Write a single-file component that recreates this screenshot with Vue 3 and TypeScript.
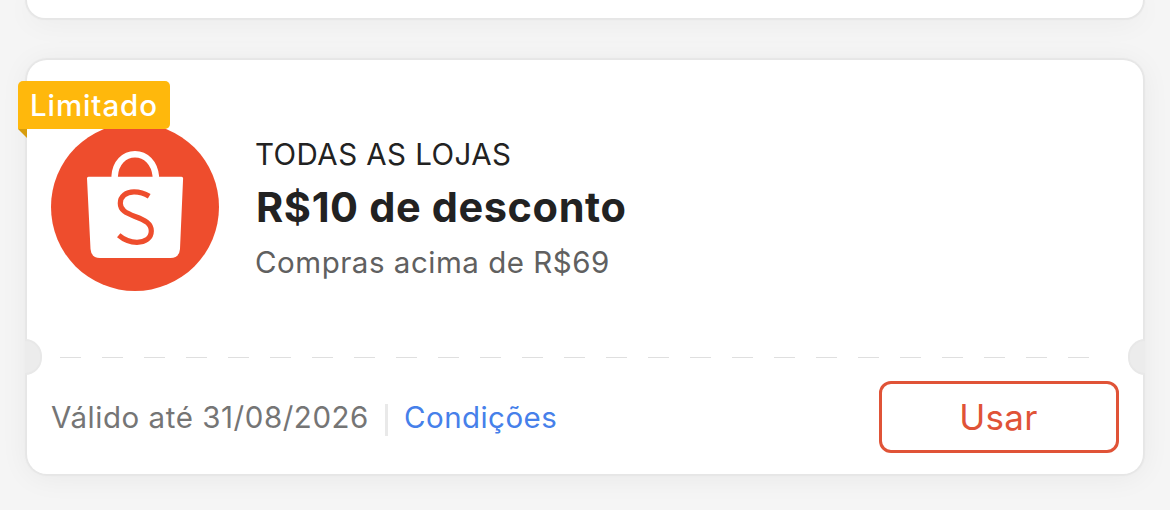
<script setup lang="ts">
interface Voucher {
  tag: string
  scope: string
  title: string
  minimum: string
  validity: string
  terms: string
  action: string
}

const voucher: Voucher = {
  tag: 'Limitado',
  scope: 'TODAS AS LOJAS',
  title: 'R$10 de desconto',
  minimum: 'Compras acima de R$69',
  validity: 'Válido até 31/08/2026',
  terms: 'Condições',
  action: 'Usar',
}
</script>

<template>
  <main class="page">
    <section class="card card-previous"></section>
    <article class="card voucher">
      <div class="tag"><span class="tag-text">{{ voucher.tag }}</span></div>
      <span class="notch notch-left"></span>
      <span class="notch notch-right"></span>

      <div class="main">
        <svg class="logo" viewBox="0 0 168 168" aria-hidden="true">
          <circle cx="84" cy="84" r="84" fill="#ee4d2d" />
          <path d="M63.700 56V53C64.500 40 73 31.200 84 31.200S103.500 40 104.800 53V56" fill="none" stroke="#fff" stroke-width="6.500" />
          <path d="M37.500 53.800H130.500Q132.200 53.800 132.100 55.500L129 126Q128.400 135 119.500 135H49Q40.100 135 39.500 126L36 55.500Q35.900 53.800 37.500 53.800Z" fill="#fff" />
          <path d="M98.200 73.300C92.500 69.700 87.800 68.900 83 68.900C75 68.900 69.300 73.400 69.300 80.200C69.300 87 74.500 90 84 93.500C94 97.200 100.300 100.500 100.300 108C100.300 115 94.400 119.300 86 119.300C79 119.300 73 116.800 67.700 112.300" fill="none" stroke="#ee4d2d" stroke-width="5.200" />
        </svg>
        <div class="info">
          <div class="scope">{{ voucher.scope }}</div>
          <div class="title">{{ voucher.title }}</div>
          <div class="minimum">{{ voucher.minimum }}</div>
        </div>
      </div>

      <div class="divider"></div>

      <footer class="footer">
        <span class="validity">{{ voucher.validity }}</span>
        <span class="bar"></span>
        <a class="terms">{{ voucher.terms }}</a>
        <button class="action" type="button">{{ voucher.action }}</button>
      </footer>
    </article>
  </main>
</template>

<style>
body {
  margin: 0;
  overflow: hidden;
}
</style>

<style scoped>
.page {
  box-sizing: border-box;
  width: 1170px;
  height: 510px;
  padding: 0 27px;
  overflow: hidden;
  display: flex;
  flex-direction: column;
  gap: 42px;
  background: #f5f5f5;
  font-family: Inter, "Noto Sans", sans-serif;
}
.card {
  flex: none;
  background: #fff;
  box-shadow: 0 0 1px 2px #e6e6e6, 0 3px 30px rgba(0, 0, 0, 0.06);
}
.card-previous {
  height: 18px;
  border-radius: 0 0 20px 20px;
}
.voucher {
  position: relative;
  height: 414px;
  border-radius: 20px;
  display: flex;
  flex-direction: column;
}
.tag {
  position: absolute;
  left: -9px;
  top: 21px;
  width: 152px;
  height: 48px;
  box-sizing: border-box;
  padding-left: 12px;
  border-radius: 5px 5px 5px 0;
  background: #ffb80c;
  color: #fff;
  font-size: 29.5px;
  font-weight: 500;
  line-height: 49px;
  letter-spacing: 0.9px;
  white-space: nowrap;
}
.tag::after {
  content: "";
  position: absolute;
  left: 0;
  top: 48px;
  width: 9px;
  height: 9px;
  background: #d79c0c;
  clip-path: polygon(0 0, 100% 0, 100% 100%);
}
.notch {
  position: absolute;
  top: 279px;
  box-sizing: border-box;
  width: 17px;
  height: 36px;
  background: #ececec;
  border: 2px solid #e8e8e8;
}
.notch-left {
  left: -2px;
  border-left: 0;
  border-radius: 0 18px 18px 0;
}
.notch-right {
  right: -2px;
  border-right: 0;
  border-radius: 18px 0 0 18px;
}
.main {
  height: 297px;
  box-sizing: border-box;
  padding: 63px 24px 0;
  display: flex;
  gap: 36px;
}
.logo {
  flex: none;
  width: 168px;
  height: 168px;
}
.info {
  padding-top: 13px;
  white-space: nowrap;
}
.scope {
  font-size: 29.5px;
  line-height: 36px;
  letter-spacing: 0.45px;
  color: #222;
}
.title {
  margin-top: 8px;
  padding-left: 1px;
  font-size: 41.5px;
  font-weight: 700;
  line-height: 54px;
  letter-spacing: 0.6px;
  color: #222;
}
.minimum {
  margin-top: 10px;
  font-size: 29.5px;
  line-height: 36px;
  letter-spacing: 0.52px;
  color: #606060;
}
.divider {
  height: 1px;
  margin-left: 33px;
  margin-right: 54px;
  background: repeating-linear-gradient(90deg, #dfdfdf 0 21px, transparent 21px 42px);
}
.footer {
  display: flex;
  align-items: center;
  height: 72px;
  margin-top: 23px;
  padding: 0 24px;
  font-size: 29.5px;
  line-height: 36px;
  letter-spacing: 0.55px;
  white-space: nowrap;
}
.validity {
  width: 319px;
  color: #757575;
}
.bar {
  width: 3px;
  height: 32px;
  margin: 5px 16px 0 15px;
  background: #e9e9e9;
}
.terms {
  color: #4680ea;
  letter-spacing: 0.45px;
}
.action {
  box-sizing: border-box;
  width: 240px;
  height: 72px;
  margin-left: auto;
  padding: 0 1px 0 0;
  border: 3px solid #e05337;
  border-radius: 12px;
  background: #fff;
  color: #e05337;
  font: 400 35px/66px Inter, "Noto Sans", sans-serif;
  letter-spacing: 0.3px;
}
</style>
